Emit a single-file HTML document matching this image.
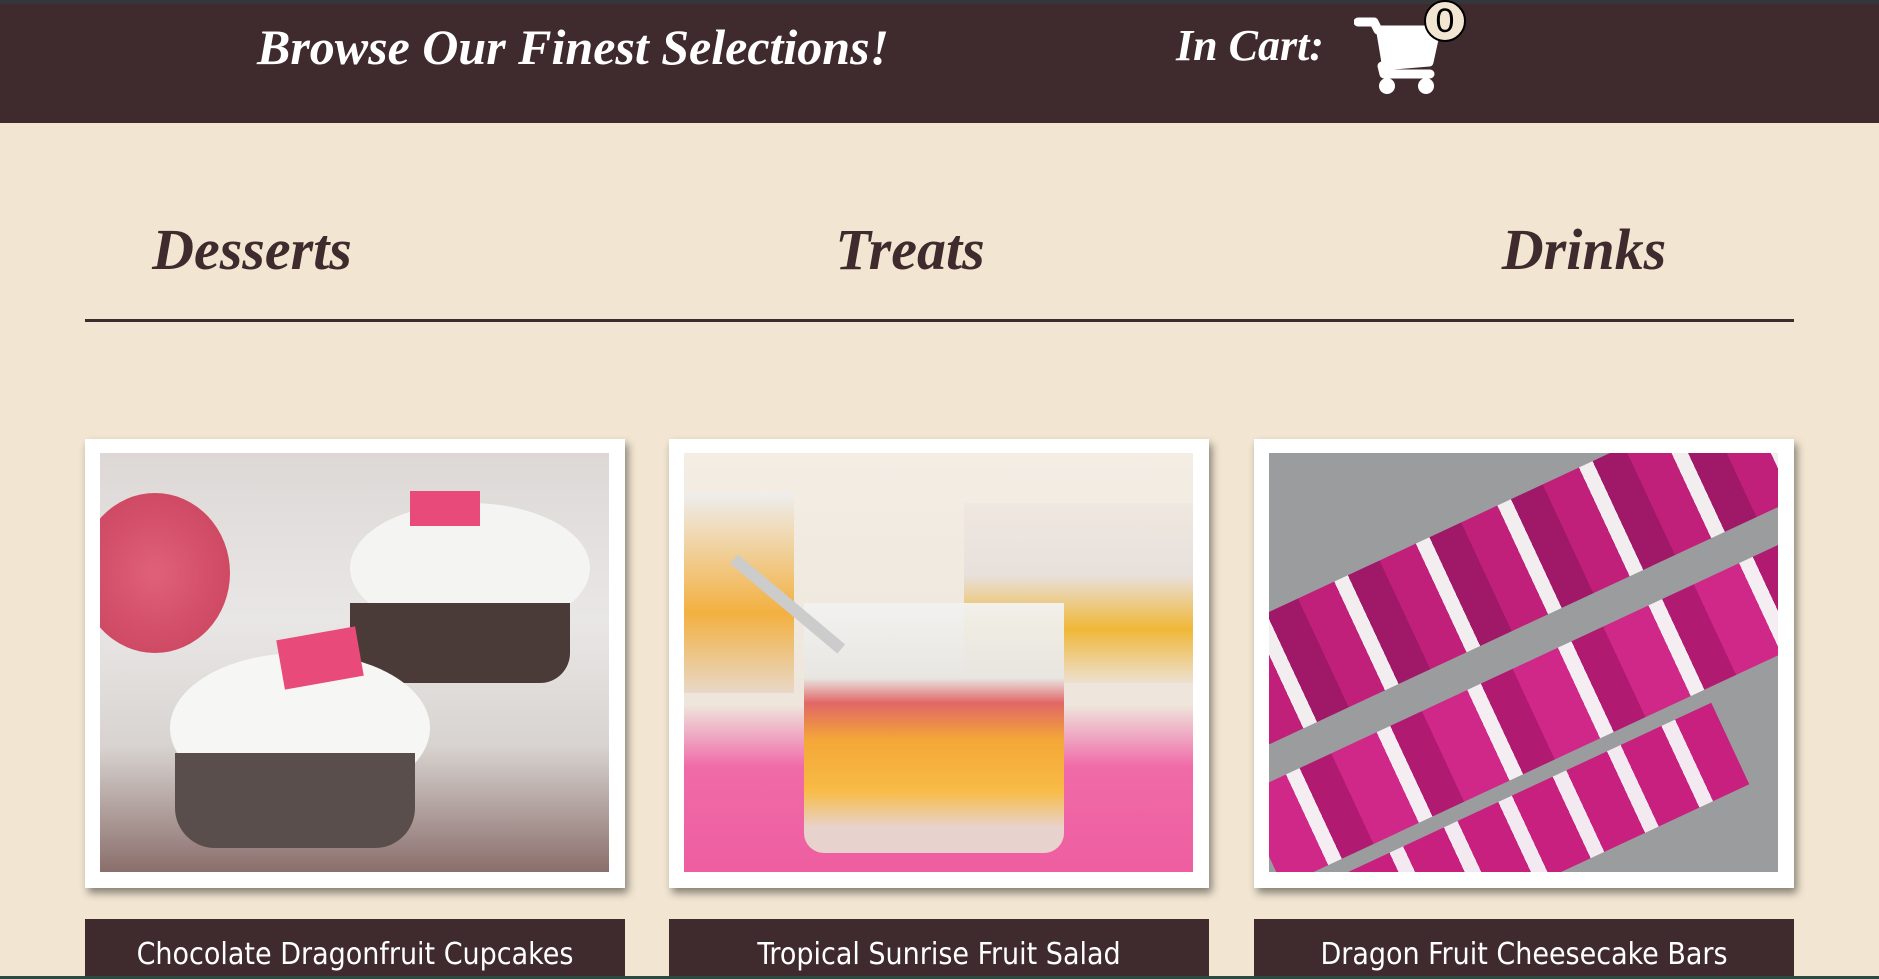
<!DOCTYPE html>
<html><head><meta charset="utf-8"><style>
*{margin:0;padding:0;box-sizing:border-box}
body{width:1879px;height:979px;overflow:hidden;background:#f2e6d2;position:relative;font-family:"Liberation Sans",sans-serif}
.topbar{position:absolute;left:0;top:0;width:1879px;height:4px;background:#35363a}
.hdr{position:absolute;left:0;top:4px;width:1879px;height:119px;background:#3f2a2d}
.script{font-family:"Liberation Serif",serif;font-style:italic;font-weight:bold}
.title{position:absolute;left:200px;width:746px;text-align:center;top:14px;font-size:50px;color:#fff}
.cart{position:absolute;left:1176px;top:16px;font-size:44px;color:#fff}
.badge{position:absolute;left:1424px;top:-4px;width:42px;height:42px;border-radius:50%;background:#f2e6d2;border:2px solid #000;font-size:34px;text-align:center;line-height:38px;color:#000}
.nav{position:absolute;top:216px;font-size:58px;color:#3f2a2d;width:300px;text-align:center}
.line{position:absolute;left:85px;top:319px;width:1709px;height:3px;background:#3f2a2d}
.card{position:absolute;top:439px;width:540px;height:449px;background:#fff;box-shadow:3px 5px 8px rgba(0,0,0,.45)}
.img{position:absolute;left:15px;top:14px;width:509px;height:419px;overflow:hidden}
.lab{position:absolute;top:919px;width:540px;height:60px;background:#3f2a2d;color:#fff;text-align:center;font-size:30px;padding-top:18px;font-family:"DejaVu Sans Condensed","Liberation Sans",sans-serif}
.bot{position:absolute;left:0;top:976px;width:1879px;height:3px;background:#2c4a3f}
</style></head><body>
<div class="topbar"></div>
<div class="hdr">
<div class="title script">Browse Our Finest Selections!</div>
<div class="cart script">In Cart:</div>
<svg style="position:absolute;left:1354px;top:12px" width="86" height="80" viewBox="0 0 86 80"><path d="M4 6 H20 L24 14 H82 L75 46 L28 50 L30 58 H76" fill="none" stroke="#fff" stroke-width="9" stroke-linejoin="round" stroke-linecap="round"/><path d="M22 14 H82 L75 46 L28 50 Z" fill="#fff"/><circle cx="33" cy="70" r="8" fill="#fff"/><circle cx="72" cy="70" r="8" fill="#fff"/></svg>
<div class="badge">0</div>
</div>
<div class="nav script" style="left:102px">Desserts</div>
<div class="nav script" style="left:760px">Treats</div>
<div class="nav script" style="left:1434px">Drinks</div>
<div class="line"></div>

<div class="card" style="left:85px"><div class="img" style="background:linear-gradient(180deg,#ddd8d6 0%,#e9e7e6 40%,#d8d3d0 70%,#8a6f6c 100%)">
<div style="position:absolute;left:-20px;top:40px;width:150px;height:160px;border-radius:50%;background:radial-gradient(#e0607a,#c8405a)"></div>
<div style="position:absolute;left:250px;top:50px;width:240px;height:130px;border-radius:50%;background:#f4f4f2"></div>
<div style="position:absolute;left:250px;top:150px;width:220px;height:80px;background:#4a3a38;border-radius:0 0 30px 30px"></div>
<div style="position:absolute;left:70px;top:200px;width:260px;height:150px;border-radius:50%;background:#f6f6f4"></div>
<div style="position:absolute;left:75px;top:300px;width:240px;height:95px;background:#5a4e4c;border-radius:0 0 40px 40px"></div>
<div style="position:absolute;left:180px;top:180px;width:80px;height:50px;background:#e84a7a;transform:rotate(-10deg)"></div>
<div style="position:absolute;left:310px;top:38px;width:70px;height:35px;background:#e84a7a"></div>
</div></div>
<div class="lab" style="left:85px">Chocolate Dragonfruit Cupcakes</div>

<div class="card" style="left:669px"><div class="img" style="background:linear-gradient(180deg,#f3ede4 0%,#eee6dc 60%,#f06aa8 75%,#ee5ea0 100%)">
<div style="position:absolute;left:0;top:40px;width:110px;height:200px;background:linear-gradient(#eee 0%,#f3b040 60%,#e8d8c8)"></div>
<div style="position:absolute;left:280px;top:50px;width:229px;height:180px;background:linear-gradient(#efe8e0 0%,#e8e0dc 40%,#f0b838 70%,#ece0d0)"></div>
<div style="position:absolute;left:120px;top:150px;width:260px;height:250px;background:linear-gradient(#f2f2f0 0%,#e8e6e2 30%,#e06060 40%,#f4a830 55%,#f8c040 75%,#e8d8d0 90%);border-radius:0 0 20px 20px;opacity:.95"></div>
<div style="position:absolute;left:50px;top:100px;width:140px;height:12px;background:#ccc;transform:rotate(40deg);transform-origin:left"></div>
</div></div>
<div class="lab" style="left:669px">Tropical Sunrise Fruit Salad</div>

<div class="card" style="left:1254px"><div class="img" style="background:#9a9c9e">
<div style="position:absolute;left:-60px;top:30px;width:700px;height:120px;background:repeating-linear-gradient(90deg,#c0207a 0 40px,#f2eef0 40px 55px,#a01868 55px 90px);transform:rotate(-25deg)"></div>
<div style="position:absolute;left:-40px;top:190px;width:700px;height:100px;background:repeating-linear-gradient(90deg,#d02888 0 50px,#f4eef2 50px 65px,#b01a70 65px 100px);transform:rotate(-25deg)"></div>
<div style="position:absolute;left:80px;top:330px;width:400px;height:90px;background:repeating-linear-gradient(90deg,#c8207e 0 45px,#f2eaf0 45px 60px);transform:rotate(-25deg)"></div>
</div></div>
<div class="lab" style="left:1254px">Dragon Fruit Cheesecake Bars</div>
<div class="bot"></div>
</body></html>
